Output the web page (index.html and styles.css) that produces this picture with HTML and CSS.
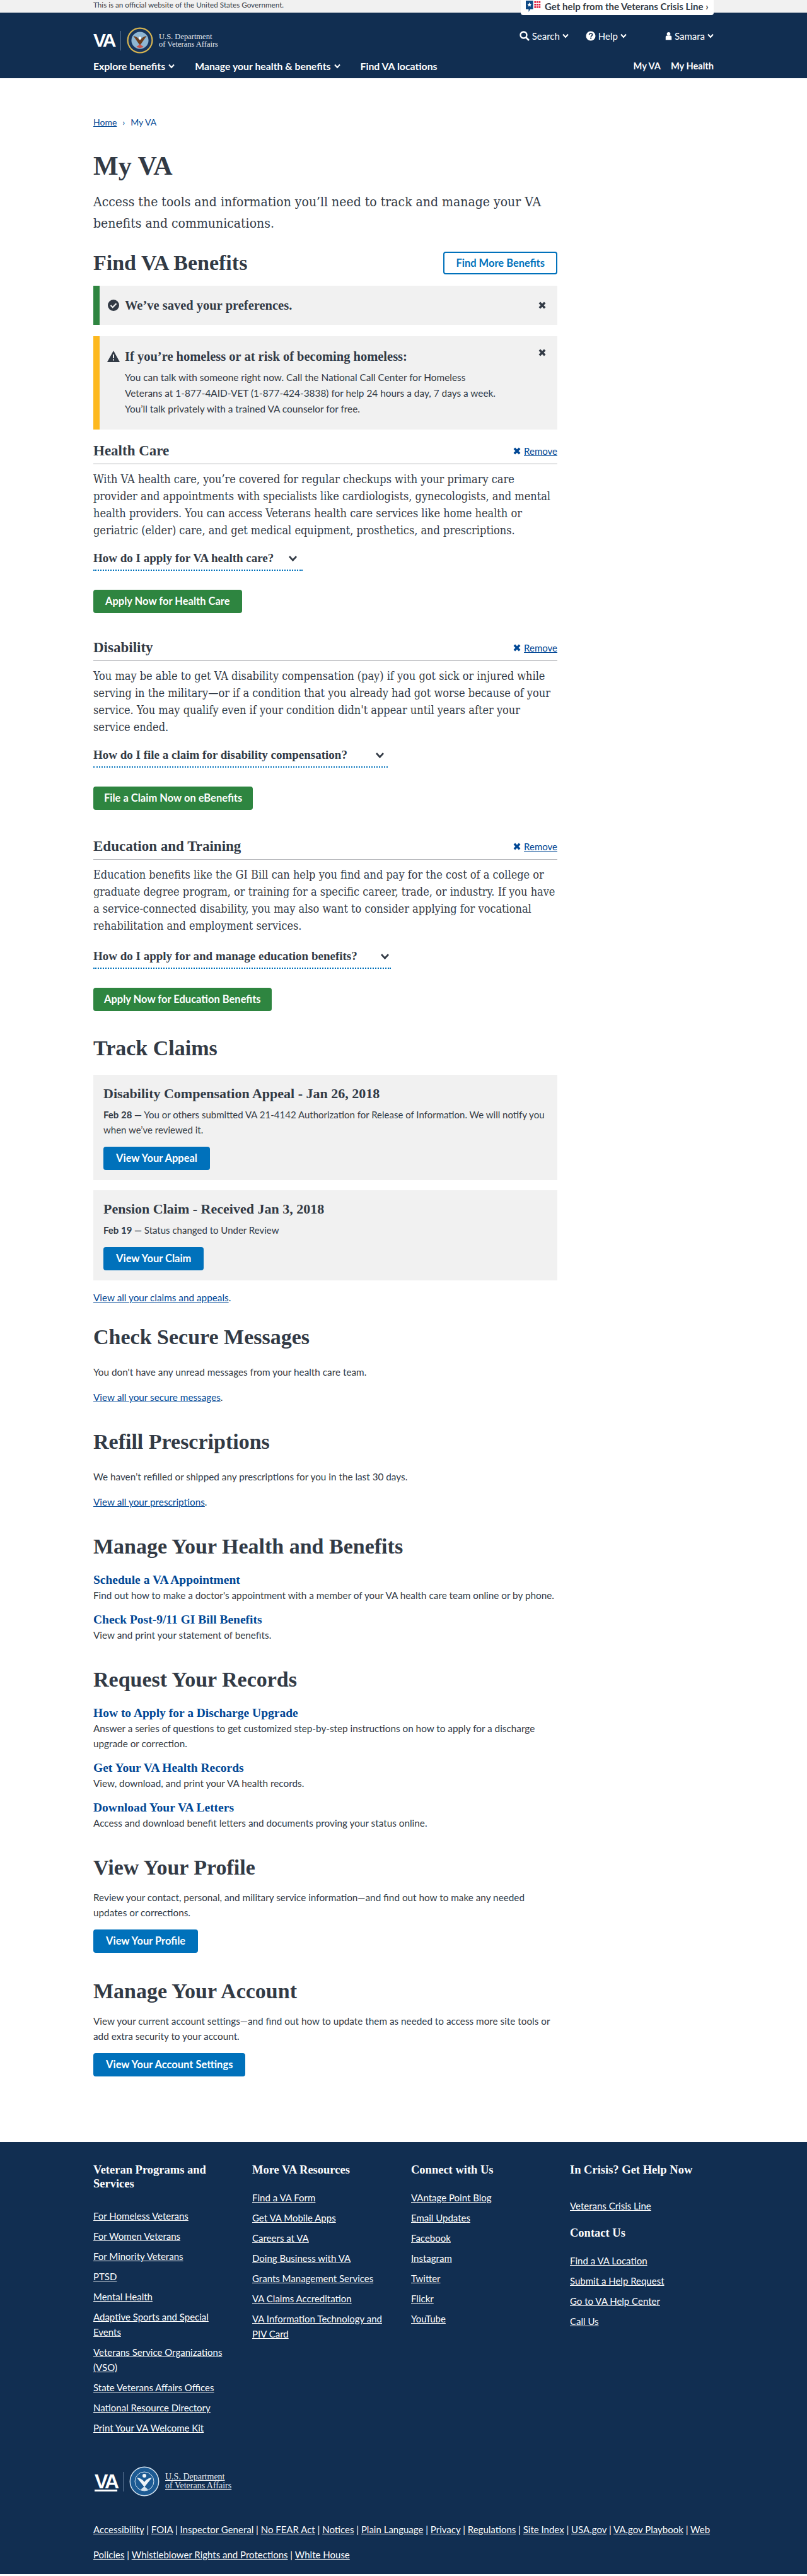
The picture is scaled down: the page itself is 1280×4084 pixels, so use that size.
FILE: index.html
```html
<!DOCTYPE html>
<html lang="en">
<head>
  <meta charset="UTF-8" />
  <title>My VA</title>
  <link rel="stylesheet" href="styles.css">
</head>
<body>
  <svg class="sprites" width="0" height="0">
    <symbol id="i-chev" viewBox="0 0 10 8"><path d="M1 1.500 5 6l4-4.500" fill="none" stroke="currentColor" stroke-width="2"/></symbol>
    <symbol id="i-x" viewBox="0 0 10 10"><path d="M1.500 1.500l7 7m0-7l-7 7" fill="none" stroke="currentColor" stroke-width="3"/></symbol>
    <symbol id="i-seal" viewBox="0 0 48 48"><circle cx="24" cy="24" r="23.500" fill="#d9b650"/><circle cx="24" cy="24" r="21" fill="#17355e"/><circle cx="24" cy="24" r="15.500" fill="#8fb6d3"/><path d="M24 33 12 16c6 1 9 4 12 8 3-4 6-7 12-8z" fill="#6b3d1e"/><path d="M17 36l7-5 7 5-7 2z" fill="#c9534a"/><circle cx="24" cy="20" r="2.500" fill="#fff"/></symbol>
    <symbol id="i-seal-w" viewBox="0 0 48 48"><circle cx="24" cy="24" r="23.500" fill="#d6e4f0"/><circle cx="24" cy="24" r="22" fill="#1c5a93"/><circle cx="24" cy="24" r="15" fill="none" stroke="#d6e4f0"/><path d="M24 33 12 18c6 1 9 3 12 7 3-4 6-6 12-7z" fill="#eef4f8"/><path d="M18 37l6-5 6 5-6 2z" fill="#d6e4f0"/><circle cx="24" cy="15" r="3" fill="#eef4f8"/></symbol>
  </svg>

  <header class="site-header">
    <div class="gov-bar">
      <div class="wrap gov-inner">
        <span>This is an official website of the United States Government.</span>
        <a class="crisis-tab" href="#">
          <svg viewBox="0 0 28 22"><path d="M0 1h13v15H8l-3 5v-5H0z" fill="#0f4a86"/><path d="M6.500 4l1.200 2.600 2.800.3-2.100 1.900.6 2.800-2.500-1.400L4 11.600l.6-2.800-2.100-1.900 2.800-.3z" fill="#fff"/><g fill="#e31c3d"><rect x="15" y="2" width="3" height="3"/><rect x="19" y="2" width="3" height="3"/><rect x="23" y="2" width="3" height="3"/><rect x="15" y="6.500" width="3" height="3"/><rect x="19" y="6.500" width="3" height="3"/><rect x="23" y="6.500" width="3" height="3"/><rect x="15" y="11" width="3" height="3"/><rect x="19" y="11" width="3" height="3"/><rect x="23" y="11" width="3" height="3"/></g></svg>
          Get help from the Veterans Crisis Line ›
        </a>
      </div>
    </div>
    <div class="wrap brand-row">
      <a class="logo" href="#">
        <span class="logo-va">VA</span>
        <span class="logo-rule"></span>
        <svg class="logo-seal"><use href="#i-seal"/></svg>
        <span class="logo-text">U.S. Department<br>of Veterans Affairs</span>
      </a>
      <div class="user-nav">
        <a href="#" class="un-search"><svg width="16" height="16" viewBox="0 0 16 16"><circle cx="6.500" cy="6.500" r="5" fill="none" stroke="currentColor" stroke-width="2.400"/><path d="M10 10l5 5" stroke="currentColor" stroke-width="2.600"/></svg> Search <svg class="chev"><use href="#i-chev"/></svg></a>
        <a href="#" class="un-help"><svg width="16" height="16" viewBox="0 0 16 16"><circle cx="8" cy="8" r="7.500" fill="currentColor"/><path d="M5.500 6.200C5.700 4.800 6.700 4 8.100 4c1.500 0 2.500.9 2.500 2.100 0 1.900-2.400 1.800-2.400 3.400" fill="none" stroke="#112e51" stroke-width="1.600"/><rect x="7.200" y="10.600" width="2" height="2" fill="#112e51"/></svg> Help <svg class="chev"><use href="#i-chev"/></svg></a>
        <a href="#" class="un-user"><svg width="11" height="16" viewBox="0 0 14 16"><circle cx="7" cy="4" r="3.600" fill="currentColor"/><path d="M1 16V10c0-1.500 1-2.500 2.500-2.500h7C12 7.500 13 8.500 13 10v6z" fill="currentColor"/></svg> Samara <svg class="chev"><use href="#i-chev"/></svg></a>
      </div>
    </div>
    <div class="wrap main-nav">
      <nav class="nav-left">
        <a href="#">Explore benefits <svg class="chev"><use href="#i-chev"/></svg></a>
        <a href="#">Manage your health &amp; benefits <svg class="chev"><use href="#i-chev"/></svg></a>
        <a href="#">Find VA locations</a>
      </nav>
      <nav class="nav-right">
        <a href="#">My VA</a>
        <a href="#">My Health</a>
      </nav>
    </div>
  </header>

  <main class="wrap">
    <div class="page">
      <div class="breadcrumbs"><a href="#">Home</a><span class="sep">›</span><span>My VA</span></div>

      <h1>My VA</h1>
      <p class="lead">Access the tools and information you’ll need to track and manage your VA benefits and communications.</p>

      <div class="benefits-head">
        <h2>Find VA Benefits</h2>
        <a class="btn btn-outline" href="#">Find More Benefits</a>
      </div>

      <div class="alert alert-success">
        <svg class="alert-icon" width="20" height="18" viewBox="0 0 18 18"><circle cx="9" cy="9" r="9" fill="#323a45"/><path d="M4.500 9l3.200 3.200 5.800-6" fill="none" stroke="#f1f1f1" stroke-width="2.200"/></svg>
        <h4>We’ve saved your preferences.</h4>
        <svg class="alert-close"><use href="#i-x"/></svg>
      </div>

      <div class="alert alert-warning">
        <svg class="alert-icon" width="20" height="18" viewBox="0 0 20 18"><path d="M10 0l10 18H0z" fill="#323a45"/><rect x="9" y="6" width="2" height="6" fill="#f1f1f1"/><rect x="9" y="13.500" width="2" height="2" fill="#f1f1f1"/></svg>
        <div class="alert-body">
          <h4>If you’re homeless or at risk of becoming homeless:</h4>
          <p>You can talk with someone right now. Call the National Call Center for Homeless<br>Veterans at 1-877-4AID-VET (1-877-424-3838) for help 24 hours a day, 7 days a week.<br>You’ll talk privately with a trained VA counselor for free.</p>
        </div>
        <svg class="alert-close"><use href="#i-x"/></svg>
      </div>

      <section class="benefit benefit-first">
        <div class="benefit-head">
          <h3>Health Care</h3>
          <a class="remove" href="#"><svg><use href="#i-x"/></svg><span>Remove</span></a>
        </div>
        <p>With VA health care, you’re covered for regular checkups with your primary care provider and appointments with specialists like cardiologists, gynecologists, and mental health providers. You can access Veterans health care services like home health or geriatric (elder) care, and get medical equipment, prosthetics, and prescriptions.</p>
        <div class="faq faq-health"><span>How do I apply for VA health care?</span><svg class="faq-chev"><use href="#i-chev"/></svg></div>
        <a class="btn btn-green" href="#">Apply Now for Health Care</a>
      </section>

      <section class="benefit">
        <div class="benefit-head">
          <h3>Disability</h3>
          <a class="remove" href="#"><svg><use href="#i-x"/></svg><span>Remove</span></a>
        </div>
        <p>You may be able to get VA disability compensation (pay) if you got sick or injured while serving in the military—or if a condition that you already had got worse because of your service. You may qualify even if your condition didn't appear until years after your service ended.</p>
        <div class="faq faq-disability"><span>How do I file a claim for disability compensation?</span><svg class="faq-chev"><use href="#i-chev"/></svg></div>
        <a class="btn btn-green" href="#">File a Claim Now on eBenefits</a>
      </section>

      <section class="benefit benefit-last">
        <div class="benefit-head">
          <h3>Education and Training</h3>
          <a class="remove" href="#"><svg><use href="#i-x"/></svg><span>Remove</span></a>
        </div>
        <p>Education benefits like the GI Bill can help you find and pay for the cost of a college or graduate degree program, or training for a specific career, trade, or industry. If you have a service-connected disability, you may also want to consider applying for vocational rehabilitation and employment services.</p>
        <div class="faq faq-education"><span>How do I apply for and manage education benefits?</span><svg class="faq-chev"><use href="#i-chev"/></svg></div>
        <a class="btn btn-green" href="#">Apply Now for Education Benefits</a>
      </section>

      <section class="block">
        <h2>Track Claims</h2>
        <div class="claim">
          <h3>Disability Compensation Appeal - Jan 26, 2018</h3>
          <p><strong>Feb 28 —</strong> You or others submitted VA 21-4142 Authorization for Release of Information. We will notify you<br>when we’ve reviewed it.</p>
          <a class="btn btn-blue" href="#">View Your Appeal</a>
        </div>
        <div class="claim">
          <h3>Pension Claim - Received Jan 3, 2018</h3>
          <p><strong>Feb 19 —</strong> Status changed to Under Review</p>
          <a class="btn btn-blue" href="#">View Your Claim</a>
        </div>
        <p class="view-all view-all-claims"><a href="#">View all your claims and appeals</a>.</p>
      </section>

      <section class="block block-plain block-messages">
        <h2>Check Secure Messages</h2>
        <p>You don't have any unread messages from your health care team.</p>
        <p class="view-all"><a href="#">View all your secure messages</a>.</p>
      </section>

      <section class="block block-plain">
        <h2>Refill Prescriptions</h2>
        <p>We haven’t refilled or shipped any prescriptions for you in the last 30 days.</p>
        <p class="view-all"><a href="#">View all your prescriptions</a>.</p>
      </section>

      <section class="block">
        <h2>Manage Your Health and Benefits</h2>
        <div class="link-item">
          <h4><a href="#">Schedule a VA Appointment</a></h4>
          <p>Find out how to make a doctor's appointment with a member of your VA health care team online or by phone.</p>
        </div>
        <div class="link-item">
          <h4><a href="#">Check Post-9/11 GI Bill Benefits</a></h4>
          <p>View and print your statement of benefits.</p>
        </div>
      </section>

      <section class="block">
        <h2>Request Your Records</h2>
        <div class="link-item">
          <h4><a href="#">How to Apply for a Discharge Upgrade</a></h4>
          <p>Answer a series of questions to get customized step-by-step instructions on how to apply for a discharge upgrade or correction.</p>
        </div>
        <div class="link-item">
          <h4><a href="#">Get Your VA Health Records</a></h4>
          <p>View, download, and print your VA health records.</p>
        </div>
        <div class="link-item">
          <h4><a href="#">Download Your VA Letters</a></h4>
          <p>Access and download benefit letters and documents proving your status online.</p>
        </div>
      </section>

      <section class="block">
        <h2>View Your Profile</h2>
        <p>Review your contact, personal, and military service information—and find out how to make any needed updates or corrections.</p>
        <a class="btn btn-blue" href="#">View Your Profile</a>
      </section>

      <section class="block block-account">
        <h2>Manage Your Account</h2>
        <p>View your current account settings—and find out how to update them as needed to access more site tools or add extra security to your account.</p>
        <a class="btn btn-blue" href="#">View Your Account Settings</a>
      </section>
    </div>
  </main>

  <footer class="site-footer">
    <div class="wrap">
      <div class="footer-cols">
        <div class="footer-col footer-col-first">
          <h4>Veteran Programs and Services</h4>
          <ul>
            <li><a href="#">For Homeless Veterans</a></li>
            <li><a href="#">For Women Veterans</a></li>
            <li><a href="#">For Minority Veterans</a></li>
            <li><a href="#">PTSD</a></li>
            <li><a href="#">Mental Health</a></li>
            <li><a href="#">Adaptive Sports and Special</a><br><a href="#">Events</a></li>
            <li><a href="#">Veterans Service Organizations</a><br><a href="#">(VSO)</a></li>
            <li><a href="#">State Veterans Affairs Offices</a></li>
            <li><a href="#">National Resource Directory</a></li>
            <li><a href="#">Print Your VA Welcome Kit</a></li>
          </ul>
        </div>
        <div class="footer-col">
          <h4>More VA Resources</h4>
          <ul>
            <li><a href="#">Find a VA Form</a></li>
            <li><a href="#">Get VA Mobile Apps</a></li>
            <li><a href="#">Careers at VA</a></li>
            <li><a href="#">Doing Business with VA</a></li>
            <li><a href="#">Grants Management Services</a></li>
            <li><a href="#">VA Claims Accreditation</a></li>
            <li><a href="#">VA Information Technology and</a><br><a href="#">PIV Card</a></li>
          </ul>
        </div>
        <div class="footer-col">
          <h4>Connect with Us</h4>
          <ul>
            <li><a href="#">VAntage Point Blog</a></li>
            <li><a href="#">Email Updates</a></li>
            <li><a href="#">Facebook</a></li>
            <li><a href="#">Instagram</a></li>
            <li><a href="#">Twitter</a></li>
            <li><a href="#">Flickr</a></li>
            <li><a href="#">YouTube</a></li>
          </ul>
        </div>
        <div class="footer-col">
          <h4>In Crisis? Get Help Now</h4>
          <ul class="crisis-list">
            <li><a href="#">Veterans Crisis Line</a></li>
          </ul>
          <h4>Contact Us</h4>
          <ul>
            <li><a href="#">Find a VA Location</a></li>
            <li><a href="#">Submit a Help Request</a></li>
            <li><a href="#">Go to VA Help Center</a></li>
            <li><a href="#">Call Us</a></li>
          </ul>
        </div>
      </div>
      <a class="logo footer-logo" href="#">
        <span class="logo-va">VA</span>
        <span class="logo-rule"></span>
        <svg class="logo-seal"><use href="#i-seal-w"/></svg>
        <span class="logo-text">U.S. Department<br>of Veterans Affairs</span>
      </a>
      <p class="footer-links">
        <a href="#">Accessibility</a> | <a href="#">FOIA</a> | <a href="#">Inspector General</a> | <a href="#">No FEAR Act</a> | <a href="#">Notices</a> | <a href="#">Plain Language</a> | <a href="#">Privacy</a> | <a href="#">Regulations</a> | <a href="#">Site Index</a> | <a href="#">USA.gov</a> | <a href="#">VA.gov Playbook</a> | <a href="#">Web</a><br>
        <a href="#">Policies</a> | <a href="#">Whistleblower Rights and Protections</a> | <a href="#">White House</a>
      </p>
    </div>
  </footer>
</body>
</html>
```

FILE: styles.css
```css
* {
  box-sizing: border-box;
}
body {
  margin: 0;
  font-family: 'Lato', 'Liberation Sans', sans-serif;
  font-size: 15px;
  line-height: 24px;
  color: #323a45;
  background: #fff;
}
p {
  margin: 0;
}
h1, h2, h3, h4 {
  font-family: 'Liberation Serif', serif;
  font-weight: 700;
  margin: 0;
}
a {
  color: #004795;
}
.sprites {
  position: absolute;
}
.wrap {
  width: 984px;
  margin: 0 auto;
}
.chev {
  width: 10px;
  height: 8px;
}

/* header */
.site-header {
  background: #112e51;
  height: 124px;
  color: #fff;
}
.site-header a {
  color: #fff;
  text-decoration: none;
}
.gov-bar {
  background: #f1f1f1;
  height: 20px;
  color: #323a45;
  font-size: 11.7px;
  line-height: 14px;
}
.gov-inner {
  display: flex;
  justify-content: space-between;
  align-items: flex-start;
}
.site-header .crisis-tab {
  display: flex;
  align-items: center;
  gap: 5px;
  width: 306px;
  height: 24px;
  padding: 0 0 4px 8px;
  background: #fff;
  color: #323a45;
  font-size: 15px;
  font-weight: 700;
  border-radius: 0 0 4px 4px;
  white-space: nowrap;
}
.crisis-tab svg {
  width: 25px;
  height: 20px;
  flex: none;
}
.brand-row {
  display: flex;
  justify-content: space-between;
  align-items: flex-start;
  padding-top: 23px;
  height: 68px;
}
.logo {
  display: flex;
  align-items: center;
  height: 42px;
}
.logo-va {
  font-family: 'Liberation Sans', sans-serif;
  font-weight: 700;
  font-size: 30px;
  letter-spacing: -3px;
  color: #fff;
  line-height: 30px;
  width: 35px;
}
.logo-rule {
  width: 1px;
  height: 31px;
  margin: 0 9px 0 8px;
  background: #5b7493;
}
.logo-seal {
  width: 42px;
  height: 42px;
}
.logo-text {
  font-family: 'Liberation Serif', serif;
  font-size: 12.5px;
  line-height: 12px;
  margin-left: 9px;
  color: #e4e8ee;
  white-space: nowrap;
}
.user-nav {
  display: flex;
  margin-top: 5px;
  font-size: 15px;
  line-height: 18px;
}
.user-nav a {
  display: flex;
  align-items: center;
  gap: 4px;
  white-space: nowrap;
}
.un-search {
  margin-right: 27px;
}
.un-help {
  margin-right: 61px;
}
.main-nav {
  display: flex;
  justify-content: space-between;
  padding-top: 7px;
  font-size: 15.8px;
  font-weight: 700;
  line-height: 20px;
}
.nav-left, .nav-right {
  display: flex;
}
.nav-left {
  gap: 32px;
}
.nav-right {
  gap: 16px;
  font-size: 14.6px;
}
.main-nav a {
  display: flex;
  align-items: center;
  gap: 5px;
}

/* main column */
.page {
  width: 736px;
  padding-top: 60px;
  padding-bottom: 104px;
}
.breadcrumbs {
  font-size: 14px;
  line-height: 20px;
  color: #004795;
}
.sep {
  margin: 0 9px;
}
h1 {
  font-size: 42px;
  line-height: 52px;
  margin-top: 33px;
}
.lead {
  font-family: 'DejaVu Serif Condensed', 'DejaVu Serif', serif;
  font-size: 21px;
  line-height: 34px;
  margin-top: 14px;
}
.benefits-head {
  display: flex;
  justify-content: space-between;
  align-items: center;
  margin-top: 27px;
  margin-bottom: 17px;
}
h2 {
  font-size: 34px;
  line-height: 38px;
}
.btn {
  display: inline-block;
  font-weight: 700;
  font-size: 16.5px;
  text-decoration: none;
  border-radius: 4px;
  text-align: center;
}
.btn-outline {
  border: 2px solid #0071bb;
  color: #0071bb;
  padding: 0 18px;
  line-height: 32px;
  height: 36px;
}
.btn-green {
  background: #2e8540;
  color: #fff;
  padding: 0 17px;
  line-height: 37px;
  height: 37px;
}
.btn-blue {
  background: #0071bb;
  color: #fff;
  padding: 0 20px;
  line-height: 37px;
  height: 37px;
}

/* alerts */
.alert {
  display: flex;
  background: #f1f1f1;
  border-left: 10px solid #2e8540;
  padding: 0 18px 0 12px;
  margin-bottom: 18px;
}
.alert-success {
  align-items: center;
  height: 62px;
}
.alert-warning {
  border-left-color: #fdb81e;
  align-items: flex-start;
  padding-top: 20px;
  padding-bottom: 20px;
  margin-bottom: 0;
}
.alert h4 {
  font-size: 20.5px;
  line-height: 24px;
  flex: 1;
  white-space: nowrap;
}
.alert-icon {
  flex: none;
  margin-right: 8px;
}
.alert-warning .alert-icon {
  margin-top: 3px;
}
.alert-body {
  flex: 1;
}
.alert-body p {
  margin-top: 9px;
  font-size: 15.4px;
  line-height: 25px;
}
.alert-close {
  width: 12px;
  height: 12px;
  color: #323a45;
  flex: none;
}

/* benefit sections */
.benefit {
  margin-top: 42px;
}
.benefit-first {
  margin-top: 21px;
}
.benefit-last {
  margin-top: 45px;
}
.benefit-head {
  display: flex;
  justify-content: space-between;
  align-items: center;
  border-bottom: 1px solid #aeb0b5;
  padding-bottom: 7px;
}
.benefit-head h3 {
  font-size: 23px;
  line-height: 26px;
}
.remove {
  display: flex;
  align-items: center;
  font-size: 15px;
  gap: 5px;
}
.remove svg {
  width: 12px;
  height: 12px;
  color: #004795;
}
.benefit > p {
  font-family: 'DejaVu Serif Condensed', 'DejaVu Serif', serif;
  font-size: 18px;
  line-height: 27px;
  margin-top: 10px;
}
.faq {
  display: flex;
  align-items: center;
  justify-content: space-between;
  font-family: 'Liberation Serif', serif;
  font-weight: 700;
  font-size: 19px;
  line-height: 24px;
  margin-top: 19px;
  padding-bottom: 6px;
  padding-right: 8px;
  border-bottom: 2px dotted #0071bb;
}
.faq-health {
  width: 332px;
}
.faq-disability {
  width: 467px;
  padding-right: 5px;
}
.faq-education {
  width: 472px;
  margin-top: 23px;
  padding-right: 2px;
}
.faq-chev {
  width: 15px;
  height: 11px;
}
.benefit .btn-green {
  display: table;
  margin-top: 30px;
}
.benefit-first .btn-green {
  padding: 0 19px;
}

/* lower blocks */
.block {
  margin-top: 40px;
}
.block p {
  font-size: 15.3px;
}
.block h2 + p {
  margin-top: 16px;
}
.block-plain h2 + p {
  margin-top: 24px;
}
.block-messages {
  margin-top: 32px;
}
.block-account {
  margin-top: 42px;
}
.claim {
  background: #f1f1f1;
  padding: 17px 16px 16px;
  margin-top: 16px;
}
.block h2 + .claim {
  margin-top: 23px;
}
.claim h3 {
  font-size: 22px;
  line-height: 26px;
}
.block .claim p {
  margin-top: 8px;
  font-size: 15px;
}
.claim .btn-blue {
  margin-top: 15px;
  display: table;
}
.view-all {
  margin-top: 16px;
}
.view-all-claims {
  margin-top: 15px;
}
.link-item {
  margin-top: 15px;
}
.block h2 + .link-item {
  margin-top: 22px;
}
.link-item h4 {
  font-size: 19.5px;
  line-height: 24px;
}
.link-item h4 a {
  text-decoration: none;
}
.block > .btn-blue {
  margin-top: 15px;
}

/* footer */
.site-footer {
  background: #112e51;
  color: #fff;
  height: 685px;
  padding-top: 33px;
}
.site-footer a {
  color: #fff;
}
.footer-cols {
  display: grid;
  grid-template-columns: repeat(4, 228px);
  column-gap: 24px;
}
.footer-col h4 {
  font-size: 18.5px;
  line-height: 22px;
}
.footer-col ul {
  list-style: none;
  margin: 21px 0 0;
  padding: 0;
  font-size: 15px;
  line-height: 24px;
}
.footer-col-first ul {
  margin-top: 28px;
}
.footer-col ul.crisis-list {
  margin-top: 34px;
  margin-bottom: 20px;
}
.footer-col li {
  margin-bottom: 8px;
}
.footer-logo {
  height: 50px;
  margin-top: 40px;
  padding-left: 2px;
}
.footer-logo .logo-va {
  width: 37px;
  font-size: 32px;
}
.footer-logo .logo-seal {
  width: 48px;
  height: 48px;
}
.footer-logo .logo-text {
  font-size: 14px;
  line-height: 14px;
}
.footer-links {
  margin-top: 31px;
  font-size: 15px;
  line-height: 40px;
}
```
